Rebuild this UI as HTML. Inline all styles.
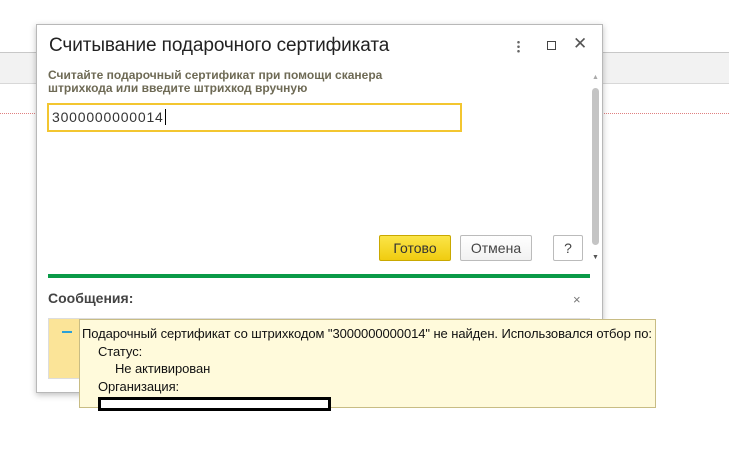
<!DOCTYPE html>
<html><head><meta charset="utf-8"><style>
*{margin:0;padding:0;box-sizing:border-box}
body{width:729px;height:466px;background:#fff;position:relative;overflow:hidden;font-family:"Liberation Sans",sans-serif}
.a{position:absolute}
</style></head><body>
<div class="a" style="left:0;top:52px;width:729px;height:32px;background:#f2f2f2;border-top:1px solid #c8c8c8;border-bottom:1px solid #d8d8d8"></div>
<div class="a" style="left:0;top:113px;width:729px;border-top:1px dotted #e08080"></div>
<div class="a" style="left:36px;top:24px;width:567px;height:369px;background:#fff;border:1px solid #b8b8b8;box-shadow:0 2px 6px rgba(0,0,0,.25)"></div>
<div class="a" style="left:49px;top:35px;font-size:19px;letter-spacing:-0.1px;color:#222">Считывание подарочного сертификата</div>
<div class="a" style="left:517px;top:40px;width:3px;height:13px;background:radial-gradient(circle,#666 1.2px,transparent 1.4px) 0 0/3px 4.5px"></div>
<div class="a" style="left:547px;top:41px;width:9px;height:9px;border:1.5px solid #444"></div>
<div class="a" style="left:573px;top:34px;font-size:17px;color:#555">✕</div>
<div class="a" style="left:48px;top:69px;font-size:12px;font-weight:bold;color:#6e6a55;line-height:13px">Считайте подарочный сертификат при помощи сканера<br>штрихкода или введите штрихкод вручную</div>
<div class="a" style="left:47px;top:103px;width:415px;height:29px;border:2px solid #f3c630;font-size:14px;letter-spacing:0.8px;padding:4px 3px;color:#333">3000000000014<span style="border-left:1px solid #000;margin-left:1px"></span></div>
<div class="a" style="left:592px;top:74px;font-size:7px;color:#aaa">▲</div>
<div class="a" style="left:592px;top:88px;width:7px;height:157px;background:#c4c4c4;border-radius:4px"></div>
<div class="a" style="left:592px;top:254px;font-size:7px;color:#555">▼</div>
<div class="a" style="left:379px;top:235px;width:72px;height:26px;background:linear-gradient(#fbe548,#f0cc10);border:1px solid #c9a800;border-radius:2px;font-size:14px;text-align:center;line-height:24px;color:#333">Готово</div>
<div class="a" style="left:460px;top:235px;width:72px;height:26px;background:linear-gradient(#fff,#f1f1f1);border:1px solid #bbb;border-radius:2px;font-size:14px;text-align:center;line-height:24px;color:#444">Отмена</div>
<div class="a" style="left:553px;top:235px;width:30px;height:26px;background:#fff;border:1px solid #bbb;border-radius:2px;font-size:14px;text-align:center;line-height:24px;color:#444">?</div>
<div class="a" style="left:48px;top:274px;width:542px;height:4px;background:#0a9a48"></div>
<div class="a" style="left:48px;top:290px;font-size:14px;font-weight:bold;color:#444">Сообщения:</div>
<div class="a" style="left:573px;top:292px;font-size:13px;color:#777">×</div>
<div class="a" style="left:48px;top:318px;width:542px;height:61px;background:#fbe498;border:1px solid #ddd"></div>
<div class="a" style="left:62px;top:331px;width:10px;height:2px;background:#2aa0d8"></div>
<div class="a" style="left:79px;top:319px;width:577px;height:89px;background:#fffadb;border:1px solid #c8bc84;font-size:13px;letter-spacing:-0.08px;color:#111;line-height:17.5px;padding:5px 0 0 2px;white-space:nowrap">
<div>Подарочный сертификат со штрихкодом "3000000000014" не найден. Использовался отбор по:</div>
<div style="padding-left:16px">Статус:</div>
<div style="padding-left:33px">Не активирован</div>
<div style="padding-left:16px">Организация:</div>
<div style="margin-left:16px;margin-top:2px;width:233px;height:14px;border:3.5px solid #000;background:#fff"></div>
</div>
</body></html>
